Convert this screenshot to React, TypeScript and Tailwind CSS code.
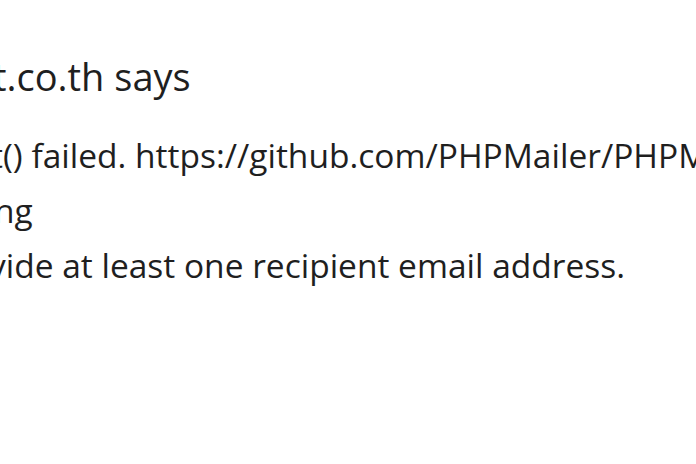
export default function App() {
  return (
    <div className="h-[464px] w-[696px] overflow-hidden bg-white text-[#1f1f1f] [font-family:'Open_Sans',sans-serif]">
      <div className="pt-[52px]">
        <h1 className="ml-[-7px] whitespace-nowrap text-[38px] font-normal leading-[48px]">t.co.th says</h1>
        <div className="mt-[28px] text-[33.5px] leading-[55px]">
          <p className="ml-[-9px] whitespace-nowrap">t() failed. https://github.com/PHPMailer/PHPMailer/wiki/Troubleshooti</p>
          <p className="ml-[-6px] whitespace-nowrap">ng</p>
          <p className="ml-[-11px] whitespace-nowrap">vide at least one recipient email address.</p>
        </div>
      </div>
    </div>
  );
}
